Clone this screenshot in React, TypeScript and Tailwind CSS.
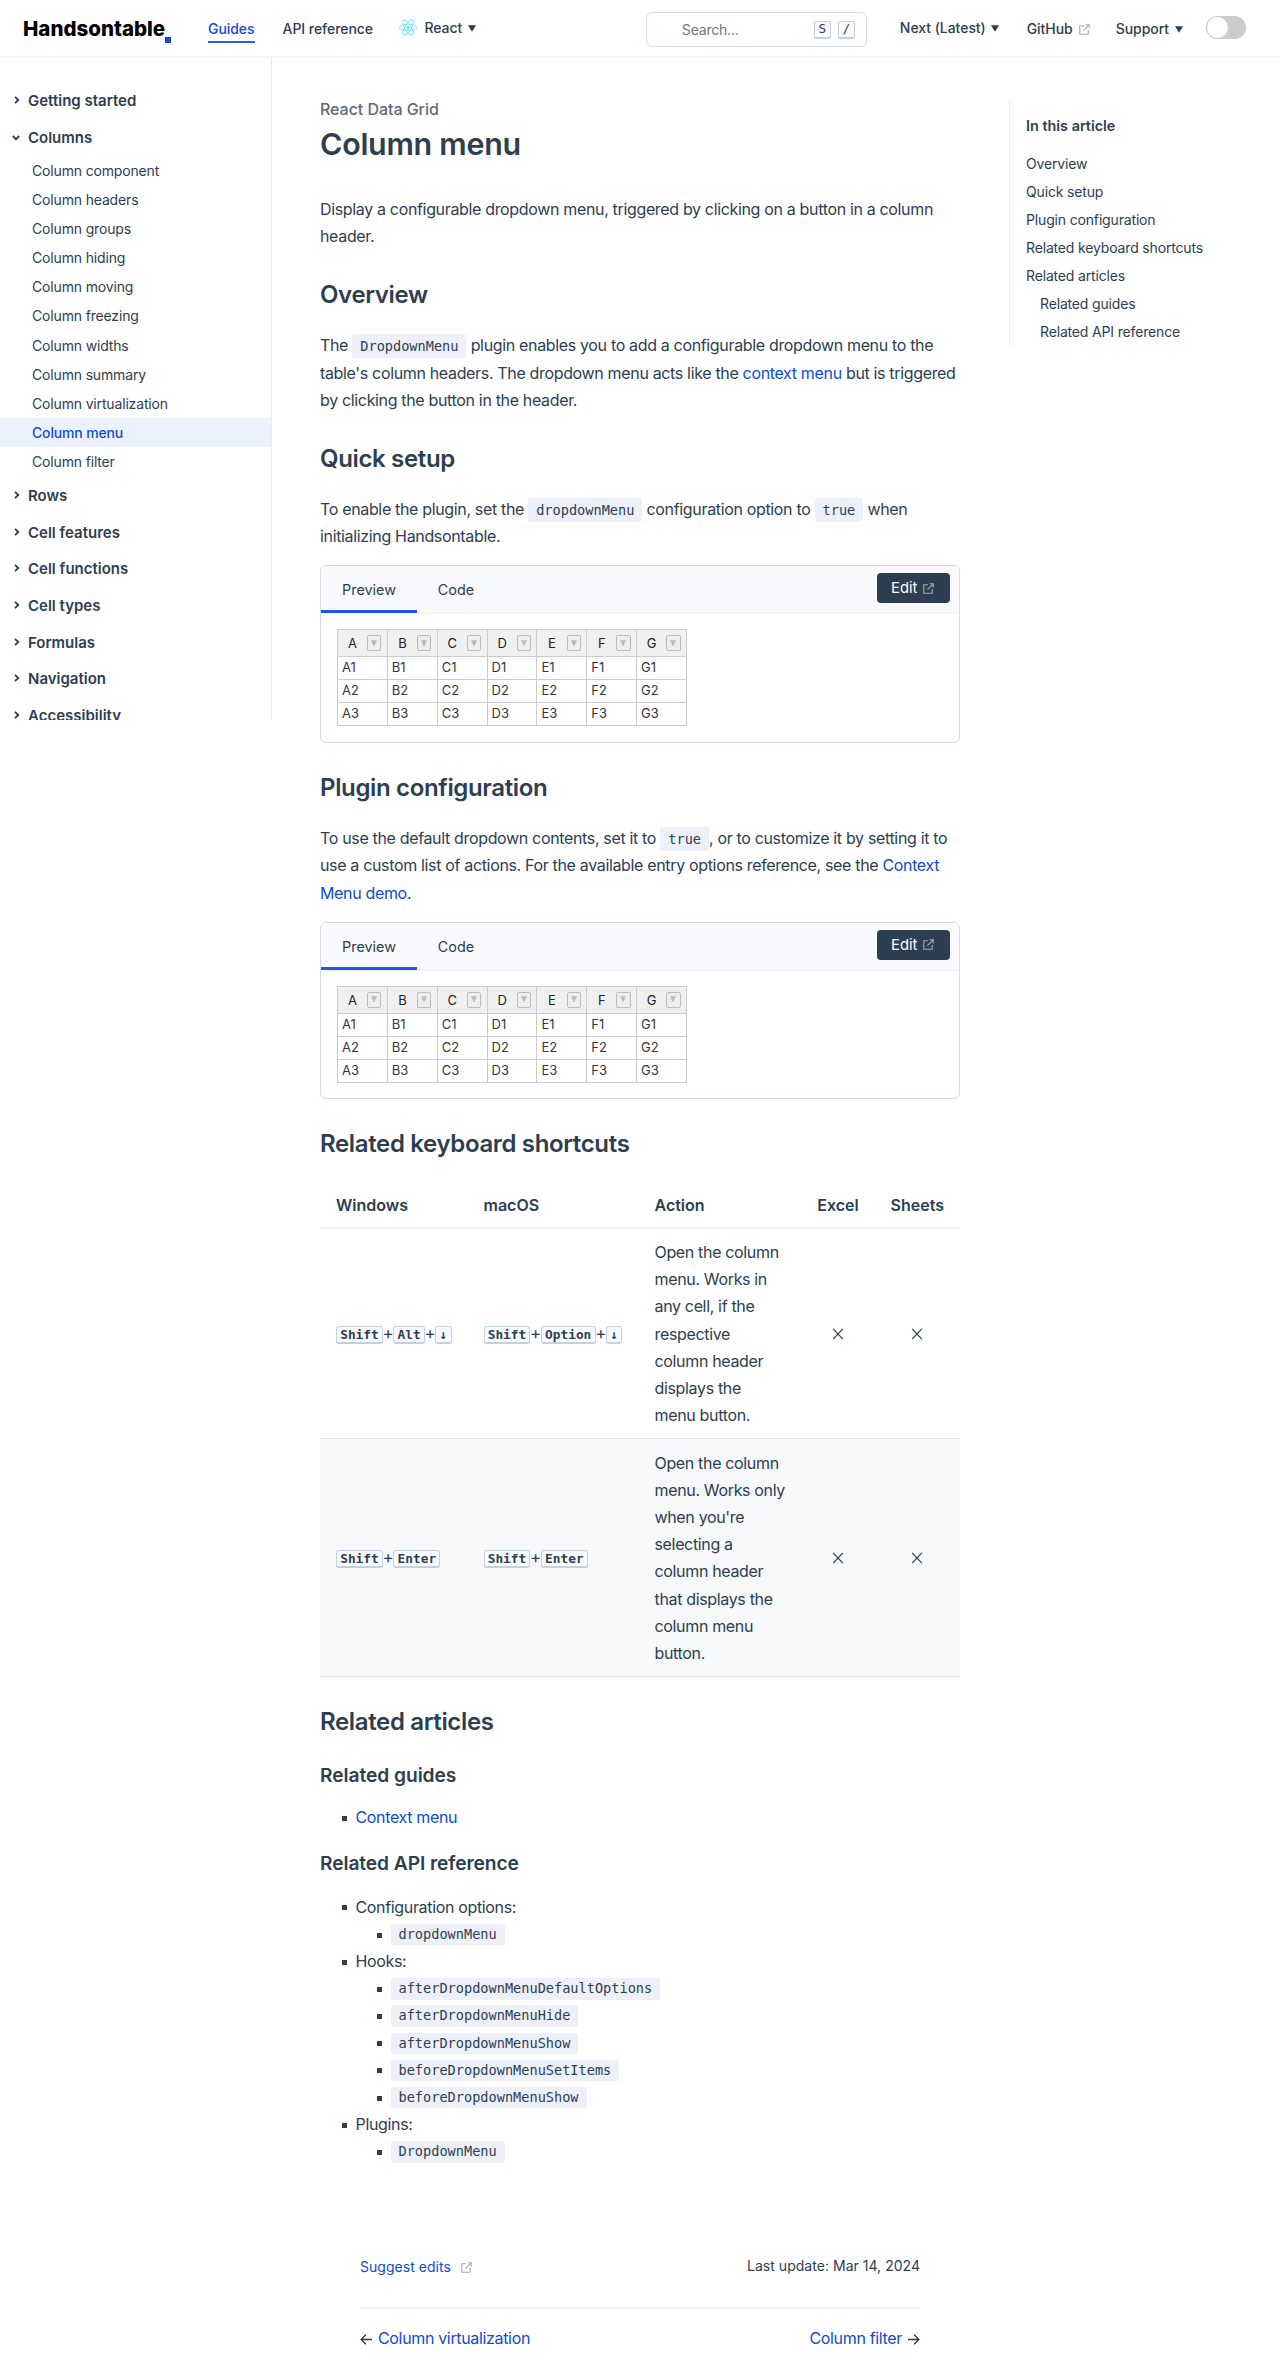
import React from "react";

const INTER = "font-[Inter,sans-serif]";
const MONO = "font-['DejaVu_Sans_Mono',monospace]";

function OutboundIcon({ className }: { className: string }) {
  return (
    <svg viewBox="0 0 11 11" className={className} fill="none" stroke="currentColor" strokeWidth="1.1">
      <path d="M5 1.8H0.8V10.2H9.2V6" />
      <path d="M6.6 0.8H10.2V4.4" />
      <path d="M10 1L4.4 6.6" />
    </svg>
  );
}

function Triangle() {
  return (
    <svg width="8" height="7" viewBox="0 0 8 7" fill="#2c3e50">
      <path d="M0 0.3H8L4 6.7Z" />
    </svg>
  );
}

function ReactLogo() {
  return (
    <svg width="18" height="17" viewBox="-11.5 -10.8 23 21.6" className="-mt-px">
      <circle r="2" fill="#61dafb" />
      <g stroke="#61dafb" strokeWidth="1" fill="none">
        <ellipse rx="11" ry="4.2" />
        <ellipse rx="11" ry="4.2" transform="rotate(60)" />
        <ellipse rx="11" ry="4.2" transform="rotate(120)" />
      </g>
    </svg>
  );
}

function SearchKey({ children, className }: { children: React.ReactNode; className: string }) {
  return (
    <span
      className={`${MONO} flex h-[18px] w-[17px] items-center justify-center rounded-[2px] border border-b-2 border-[#c3d0de] bg-[#f9faff] text-[12.8px] leading-none font-normal ${className}`}
    >
      {children}
    </span>
  );
}

function Header() {
  return (
    <header className="flex h-[58px] items-start border-b-2 border-[#f5f5f5] text-[14px] leading-5 font-medium tracking-[-0.05px]">
      <div className="mt-[17px] ml-[23px] flex w-[149px]">
        <span className="text-[20.5px] leading-6 font-extrabold tracking-normal text-black">Handsontable</span>
        <span className="mt-[20px] h-[6px] w-[6px] shrink-0 bg-[#1a42e8]" />
      </div>
      <a className="mt-[19px] ml-[36px] h-[24px] border-b-2 border-[#2e5cf0] text-[#1a42e8]">Guides</a>
      <a className="mt-[19px] ml-[28px]">API reference</a>
      <div className="mt-[18px] ml-[26px] flex items-center">
        <ReactLogo />
        <span className="ml-[7.5px]">React</span>
        <span className="ml-[6px]">
          <Triangle />
        </span>
      </div>
      <div className="mt-3 ml-auto flex h-[35px] w-[221px] items-center rounded-md border border-[#d5e0ea] pr-[11px] pl-[35px]">
        <span className="font-normal tracking-[-0.2px] text-[#757575]">Search...</span>
        <SearchKey className="ml-auto">S</SearchKey>
        <SearchKey className="ml-[7px]">/</SearchKey>
      </div>
      <div className="mt-[18px] ml-[33px] flex items-center">
        Next (Latest)
        <span className="ml-[5px]">
          <Triangle />
        </span>
      </div>
      <div className="mt-[19px] ml-[28px] flex items-center">
        GitHub
        <OutboundIcon className="ml-[6px] h-[11px] w-[11px] text-[#aaaaaa]" />
      </div>
      <div className="mt-[19px] ml-[26px] flex items-center">
        Support
        <span className="ml-[6px]">
          <Triangle />
        </span>
      </div>
      <div className="mt-4 mr-[34px] ml-[23px] h-[23px] w-[40px] rounded-full bg-[#cccccc] p-px">
        <div className="h-[21px] w-[21px] rounded-full bg-white" />
      </div>
    </header>
  );
}

const columnPages = [
  "Column component",
  "Column headers",
  "Column groups",
  "Column hiding",
  "Column moving",
  "Column freezing",
  "Column widths",
  "Column summary",
  "Column virtualization",
  "Column menu",
  "Column filter",
];

function SidebarGroup({ label, open = false }: { label: string; open?: boolean }) {
  return (
    <div className="flex h-[36.7px] items-center text-[15px] leading-5 font-semibold">
      <svg
        width="8"
        height="8"
        viewBox="0 0 8 8"
        fill="none"
        stroke="#2c3e50"
        strokeWidth="1.8"
        className={open ? "mr-2 ml-3 rotate-90" : "-mt-[2px] mr-[7px] ml-[13px]"}
      >
        <path d="M2 0.8L5.3 4L2 7.2" />
      </svg>
      {label}
    </div>
  );
}

function Sidebar() {
  return (
    <aside className="h-[662px] w-[272px] shrink-0 overflow-hidden border-r border-[#eaecef] pt-[24.5px]">
      <SidebarGroup label="Getting started" />
      <SidebarGroup label="Columns" open />
      <ul className="-mt-[0.2px] mb-[1.4px] text-[14px] tracking-[-0.16px]">
        {columnPages.map((p) => (
          <li
            key={p}
            className={
              p === "Column menu"
                ? "h-[29.15px] bg-[#ebf2fd] pl-8 leading-[29.6px] font-medium tracking-[-0.16px] text-[#104bcd]"
                : "h-[29.15px] pl-8 leading-[29.6px]"
            }
          >
            {p}
          </li>
        ))}
      </ul>
      {["Rows", "Cell features", "Cell functions", "Cell types", "Formulas", "Navigation", "Accessibility"].map((g) => (
        <SidebarGroup key={g} label={g} />
      ))}
    </aside>
  );
}

function Code({ children }: { children: React.ReactNode }) {
  return (
    <code className={`${MONO} rounded-[3px] bg-[#edf0f9] px-2 py-1 text-[13.6px] leading-none tracking-normal`}>{children}</code>
  );
}

function Link({ children }: { children: React.ReactNode }) {
  return <a className="text-[#104bcd]">{children}</a>;
}

function H2({ children }: { children: React.ReactNode }) {
  return <h2 className="mt-[29.8px] mb-[22.3px] text-[24px] leading-[30px] font-semibold tracking-[-0.35px]">{children}</h2>;
}

const letters = ["A", "B", "C", "D", "E", "F", "G"];

function GridExample() {
  return (
    <div className="mt-[14.8px] mb-[30.2px] h-[177.6px] rounded-md border border-[#cfdbe6] tracking-normal">
      <div className="flex h-[48px] rounded-t-[5px] border-b-2 border-[#f2f5f9] bg-[#f9faff] text-[14.4px] leading-5">
        <div className="h-[47px] w-24 border-b-[3px] border-[#2254f4] pt-[14px] text-center">Preview</div>
        <div className="w-[78px] pt-[14px] text-center">Code</div>
        <button className="mt-[7px] mr-[9px] ml-auto flex h-[30px] w-[73px] items-center rounded bg-[#2c3e50] pl-[14px] text-[14.8px] text-white">
          Edit
          <OutboundIcon className="ml-[6px] h-[11px] w-[11px] text-[#a5adb5]" />
        </button>
      </div>
      <table className="mt-[15px] ml-4 w-[350px] table-fixed border-collapse text-[13px] text-[#373737]">
        <thead>
          <tr className="h-[27px]">
            {letters.map((l) => (
              <th key={l} className="border border-[#cccccc] bg-[#f0f0f0] p-0 font-normal text-[#222222]">
                <div className="flex items-center justify-end pr-[5.5px] leading-4">
                  <span className="w-[31px] text-center">{l}</span>
                  <span className="flex h-4 w-[15px] items-center justify-center rounded-[2px] border border-[#bbbbbb] bg-[#eeeeee]">
                    <svg width="6" height="7" viewBox="0 0 6 7" fill="#bbbbbb">
                      <path d="M0 0.3H6L3 6.4Z" />
                    </svg>
                  </span>
                </div>
              </th>
            ))}
          </tr>
        </thead>
        <tbody>
          {[1, 2, 3].map((n) => (
            <tr key={n} className="h-[23px]">
              {letters.map((l) => (
                <td key={l} className="border border-[#cccccc] p-0 pb-px pl-1 leading-[21px]">
                  {l + n}
                </td>
              ))}
            </tr>
          ))}
        </tbody>
      </table>
    </div>
  );
}

function Keys({ keys }: { keys: string[] }) {
  return (
    <span className="flex items-center tracking-normal">
      {keys.map((k, i) => (
        <React.Fragment key={k}>
          {i > 0 && <span className="flex w-[10.5px] justify-center text-[17px]">+</span>}
          <kbd
            className={`${MONO} mt-[2px] h-[18px] rounded-[3px] border border-b-2 border-[#c3d0de] bg-[#f9faff] px-[3.2px] text-[12.8px] leading-[16px] font-bold`}
          >
            {k}
          </kbd>
        </React.Fragment>
      ))}
    </span>
  );
}

function Cross() {
  return (
    <svg width="12" height="12" viewBox="0 0 12 12" fill="none" stroke="#2c3e50" strokeWidth="1.2" className="mx-auto">
      <path d="M1.2 0.8L10.8 11.2M10.8 0.8L1.2 11.2" />
    </svg>
  );
}

const shortcuts = [
  {
    win: ["Shift", "Alt", "↓"],
    mac: ["Shift", "Option", "↓"],
    action: "Open the column menu. Works in any cell, if the respective column header displays the menu button.",
    row: "border-b border-[#dfe7ee]",
  },
  {
    win: ["Shift", "Enter"],
    mac: ["Shift", "Enter"],
    action: "Open the column menu. Works only when you're selecting a column header that displays the column menu button.",
    row: "border-b border-[#dfe7ee] bg-[#f6f8fa]",
  },
];

function ShortcutTable() {
  return (
    <table className="w-[640px] table-fixed border-collapse">
      <colgroup>
        <col className="w-[147.5px]" />
        <col className="w-[171px]" />
        <col className="w-[163px]" />
        <col className="w-[73px]" />
        <col className="w-[85.5px]" />
      </colgroup>
      <thead>
        <tr className="border-b-2 border-[#f4f5f6] text-left tracking-normal">
          {["Windows", "macOS", "Action"].map((h) => (
            <th key={h} className="px-4 pt-[9.8px] pb-2 font-semibold">
              {h}
            </th>
          ))}
          <th className="pt-[9.8px] pb-2 text-center font-semibold">Excel</th>
          <th className="pt-[9.8px] pb-2 text-center font-semibold">Sheets</th>
        </tr>
      </thead>
      <tbody>
        {shortcuts.map((s) => (
          <tr key={s.action} className={s.row}>
            <td className="py-[9.6px] pr-0 pl-4">
              <Keys keys={s.win} />
            </td>
            <td className="py-[9.6px] pr-0 pl-4">
              <Keys keys={s.mac} />
            </td>
            <td className="pt-[10.2px] pr-4 pb-[9px] pl-4">{s.action}</td>
            <td>
              <Cross />
            </td>
            <td>
              <Cross />
            </td>
          </tr>
        ))}
      </tbody>
    </table>
  );
}

function Item({ children, nested = false }: { children: React.ReactNode; nested?: boolean }) {
  return (
    <li className={nested ? "flex h-[27.2px] items-center pl-[57px]" : "flex h-[27.2px] items-center pl-[21.5px]"}>
      <span
        className={nested ? "mt-[1px] mr-[8.5px] h-[5px] w-[5px] bg-[#2c3e50]" : "mt-[1px] mr-[9px] h-[5px] w-[5px] bg-[#2c3e50]"}
      />
      {children}
    </li>
  );
}

function Article() {
  return (
    <main className="ml-12 w-[640px] shrink-0 pt-[39px] text-[16px] leading-[27.2px] tracking-[-0.34px]">
      <div className="leading-6 font-medium tracking-[-0.05px] text-[#5d6a77]">React Data Grid</div>
      <h1 className="mt-[4px] text-[30.4px] leading-[38px] font-semibold tracking-[-0.25px]">Column menu</h1>
      <p className="mt-[32.8px]">
        Display a configurable dropdown menu, triggered by clicking on a button in a column header.
      </p>

      <H2>Overview</H2>
      <p>
        The <Code>DropdownMenu</Code> plugin enables you to add a configurable dropdown menu to the table's column headers.
        The dropdown menu acts like the <Link>context menu</Link> but is triggered by clicking the button in the header.
      </p>

      <H2>Quick setup</H2>
      <p>
        To enable the plugin, set the <Code>dropdownMenu</Code> configuration option to <Code>true</Code> when initializing
        Handsontable.
      </p>
      <GridExample />

      <H2>Plugin configuration</H2>
      <p>
        To use the default dropdown contents, set it to <Code>true</Code>, or to customize it by setting it to use a custom
        list of actions. For the available entry options reference, see the <Link>Context Menu demo</Link>.
      </p>
      <GridExample />

      <H2>Related keyboard shortcuts</H2>
      <ShortcutTable />

      <h2 className="mt-[30px] text-[24px] leading-[30px] font-semibold tracking-[-0.35px]">Related articles</h2>
      <h3 className="mt-[25.5px] mb-[17.8px] text-[19.2px] leading-6 font-semibold tracking-[-0.05px]">Related guides</h3>
      <ul>
        <Item>
          <Link>Context menu</Link>
        </Item>
      </ul>
      <h3 className="mt-[19.8px] mb-[18.3px] text-[19.2px] leading-6 font-semibold tracking-[-0.08px]">
        Related API reference
      </h3>
      <ul>
        <Item>Configuration options:</Item>
        <Item nested>
          <Code>dropdownMenu</Code>
        </Item>
        <Item>Hooks:</Item>
        {[
          "afterDropdownMenuDefaultOptions",
          "afterDropdownMenuHide",
          "afterDropdownMenuShow",
          "beforeDropdownMenuSetItems",
          "beforeDropdownMenuShow",
        ].map((h) => (
          <Item key={h} nested>
            <Code>{h}</Code>
          </Item>
        ))}
        <Item>Plugins:</Item>
        <Item nested>
          <Code>DropdownMenu</Code>
        </Item>
      </ul>

      <footer className="mx-10 mt-[89.8px]">
        <div className="flex h-[54px] justify-between border-b-2 border-[#f3f4f5] text-[14px] leading-6 tracking-[0.03px]">
          <span className="flex h-6 items-center text-[#104bcd]">
            Suggest edits
            <OutboundIcon className="ml-[10px] h-[11px] w-[11px] text-[#aaaaaa]" />
          </span>
          <span className="-mt-px">Last update: Mar 14, 2024</span>
        </div>
        <div className="mt-4 flex justify-between">
          <span className="flex items-center">
            <svg width="12" height="11" viewBox="0 0 12 11" fill="none" stroke="#2c3e50" strokeWidth="1.4" className="mr-[6px]">
              <path d="M12 5.5H1.2M5.8 0.8L1.2 5.5L5.8 10.2" />
            </svg>
            <Link>Column virtualization</Link>
          </span>
          <span className="flex items-center">
            <Link>Column filter</Link>
            <svg width="12" height="11" viewBox="0 0 12 11" fill="none" stroke="#2c3e50" strokeWidth="1.4" className="ml-[6px]">
              <path d="M0 5.5H10.8M6.2 0.8L10.8 5.5L6.2 10.2" />
            </svg>
          </span>
        </div>
      </footer>
    </main>
  );
}

function Toc() {
  return (
    <nav className="mt-[42px] ml-[49px] h-[246px] border-l border-[#eaecef] pt-[12px] pl-4 text-[14px] leading-7 tracking-[-0.16px]">
      <div className="mb-[10px] text-[14.4px] font-semibold tracking-normal">In this article</div>
      <ul>
        {["Overview", "Quick setup", "Plugin configuration", "Related keyboard shortcuts", "Related articles"].map((t) => (
          <li key={t}>{t}</li>
        ))}
        <li className="pl-[14px]">Related guides</li>
        <li className="pl-[14px]">Related API reference</li>
      </ul>
    </nav>
  );
}

export default function App() {
  return (
    <div className={`${INTER} h-[2373px] w-[1280px] overflow-hidden bg-white text-[#2c3e50]`}>
      <Header />
      <div className="flex items-start">
        <Sidebar />
        <Article />
        <Toc />
      </div>
    </div>
  );
}
